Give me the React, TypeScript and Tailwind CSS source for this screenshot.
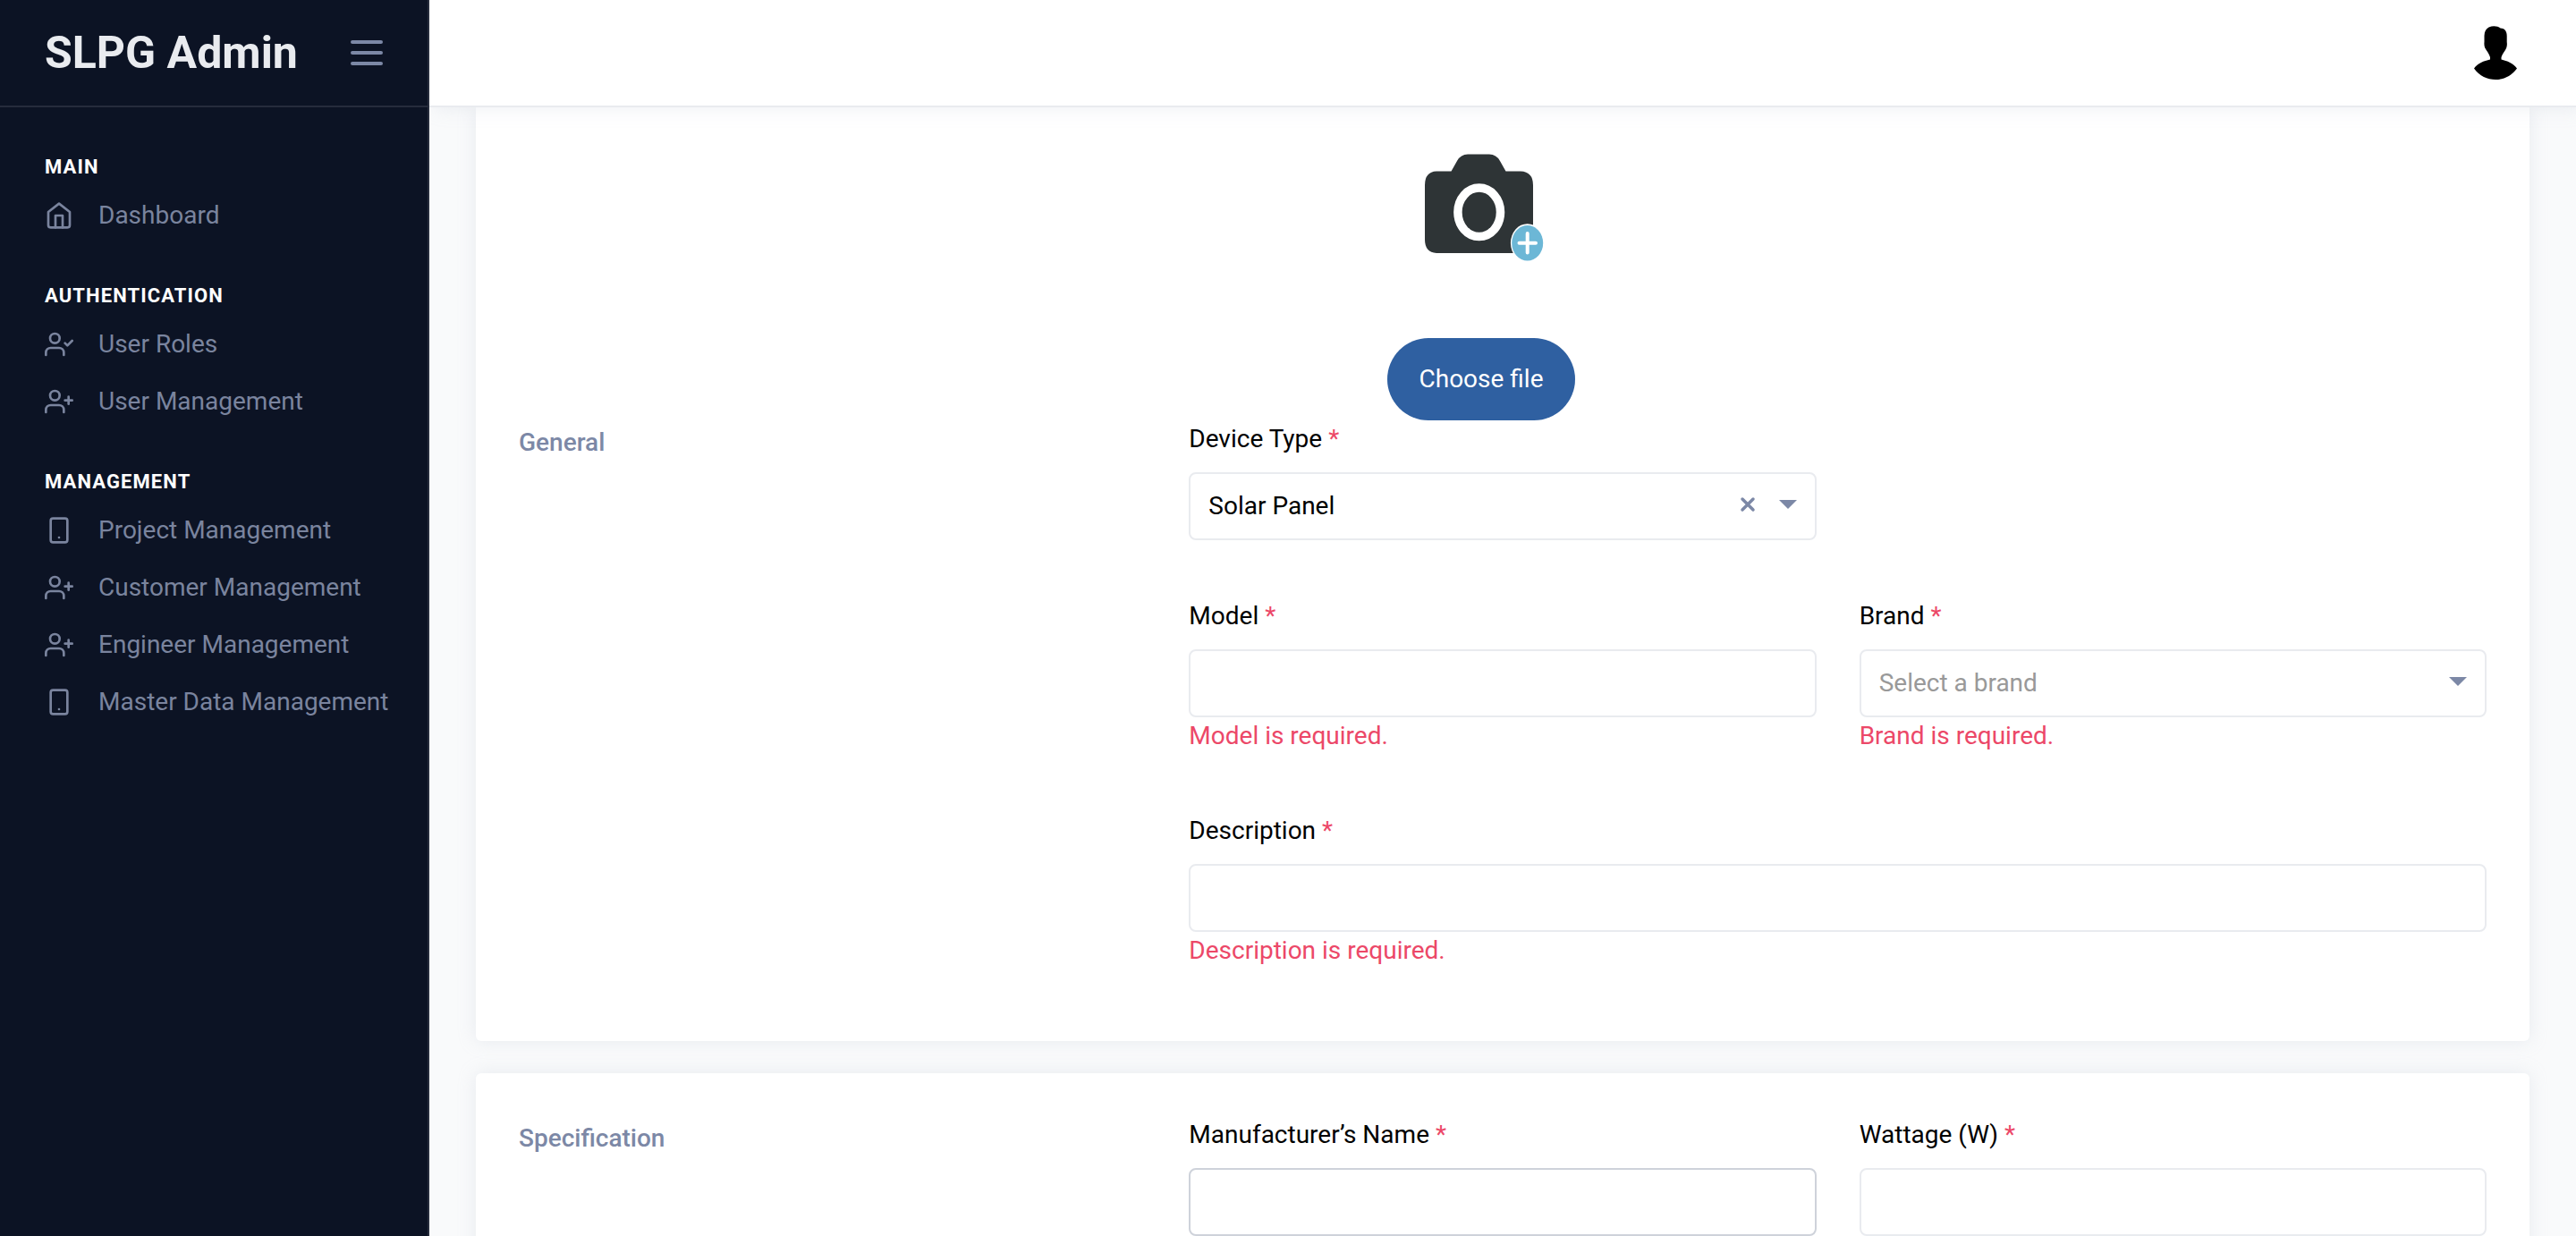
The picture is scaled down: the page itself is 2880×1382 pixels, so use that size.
import type { ReactNode } from "react";
import { FiHome, FiSmartphone, FiUserCheck, FiUserPlus } from "react-icons/fi";
import type { IconType } from "react-icons";

type NavItem = { label: string; icon: IconType };
type NavSection = { title: string; items: NavItem[] };

const sections: NavSection[] = [
  { title: "Main", items: [{ label: "Dashboard", icon: FiHome }] },
  {
    title: "Authentication",
    items: [
      { label: "User Roles", icon: FiUserCheck },
      { label: "User Management", icon: FiUserPlus },
    ],
  },
  {
    title: "Management",
    items: [
      { label: "Project Management", icon: FiSmartphone },
      { label: "Customer Management", icon: FiUserPlus },
      { label: "Engineer Management", icon: FiUserPlus },
      { label: "Master Data Management", icon: FiSmartphone },
    ],
  },
];

function Sidebar() {
  return (
    <aside className="z-20 flex w-[480px] shrink-0 flex-col border-r-2 border-[#262c3c] bg-[#0c1324]">
      <div className="flex h-[120px] shrink-0 items-center justify-between border-b-2 border-[#262c3c] px-[50px]">
        <a href="#" className="text-[50px] leading-none font-bold text-[#e9ebef]">
          SLPG Admin
        </a>
        <button type="button" aria-label="Toggle sidebar" className="flex w-9 flex-col gap-2">
          <span className="h-1 w-full rounded-xs bg-[#7c88a6]" />
          <span className="h-1 w-full rounded-xs bg-[#7c88a6]" />
          <span className="h-1 w-full rounded-xs bg-[#7c88a6]" />
        </button>
      </div>
      <nav className="flex flex-col gap-[34px] px-[50px] pt-[43px]">
        {sections.map((section) => (
          <section key={section.title}>
            <h2 className="flex h-[46px] items-center text-[22px] font-bold tracking-wider text-white uppercase">
              {section.title}
            </h2>
            <ul>
              {section.items.map(({ label, icon: Icon }) => (
                <li key={label}>
                  <a href="#" className="flex h-16 items-center gap-7 text-[28px] whitespace-nowrap text-[#7a849e]">
                    <Icon className="size-8 shrink-0" />
                    {label}
                  </a>
                </li>
              ))}
            </ul>
          </section>
        ))}
      </nav>
    </aside>
  );
}

function Avatar() {
  return (
    <svg viewBox="0 0 60 60" className="size-[60px]" aria-hidden="true">
      <path d="M16.500 1.500C21 -0.500 26.500 0 29.500 2.600C34 2.600 36.700 6 36.700 11V18C37 20 37 22 36.200 24.500C35 28 31.500 31 30.500 35V37.500C37 39 44 42 48 47.500C42 56 33 60 24 60S6 56 0 47.500C4 42 11 39 18 37.500V35C17 31 14 28 12.200 24.500C11.300 22 11.300 20 11.500 18V11C11.700 6 13.500 3 16.500 1.500Z" />
    </svg>
  );
}

function CameraPicture() {
  return (
    <svg viewBox="0 0 200 200" className="size-[200px]" role="img" aria-label="Add a picture">
      <path
        fill="#2e3436"
        d="M50 59.500H66.500L73 48Q77 40.500 85 40.500H109Q117 40.500 121 48L127.500 59.500H144Q158 60 158 75V136Q158 150 145 151H50Q37 150 37 136V75Q37 60 50 59.500Z"
      />
      <ellipse cx="97.700" cy="105.300" rx="23.800" ry="27.200" fill="none" stroke="#fff" strokeWidth="9.500" />
      <ellipse cx="151.700" cy="139.700" rx="18.800" ry="21.500" fill="#fff" />
      <ellipse cx="151.700" cy="139.700" rx="17.500" ry="19.700" fill="#6cb7d6" />
      <path d="M142.500 139.700H161M151.700 129V150.500" stroke="#fff" strokeWidth="4" strokeLinecap="round" />
    </svg>
  );
}

function Caret() {
  return (
    <svg viewBox="0 0 20 10" className="h-2.5 w-5" fill="#7c88a6" aria-hidden="true">
      <path d="M0 0H20L10 10Z" />
    </svg>
  );
}

const boxStyle =
  "block h-[76px] w-full appearance-none rounded-lg border-2 bg-white px-5 text-[28px] outline-none";

type FieldProps = {
  id: string;
  label: string;
  error?: string;
  className?: string;
  children: ReactNode;
};

function Field({ id, label, error, className, children }: FieldProps) {
  return (
    <div className={className}>
      <label htmlFor={id} className="mb-4 block text-[28px] leading-[42px] text-black">
        {label} <span className="text-[#ec4868]">*</span>
      </label>
      {children}
      {error && <p className="text-[28px] leading-[42px] text-[#ec4868]">{error}</p>}
    </div>
  );
}

function Card({ children, className }: { children: ReactNode; className?: string }) {
  return (
    <section className={`rounded-md bg-white px-12 shadow-[0_0_20px_0_rgba(183,192,206,0.25)] ${className ?? ""}`}>
      {children}
    </section>
  );
}

function SectionTitle({ children }: { children: ReactNode }) {
  return <h3 className="pt-1 text-[28px] leading-[42px] font-medium text-[#7c88a6]">{children}</h3>;
}

export default function App() {
  return (
    <div className="flex h-screen overflow-hidden bg-[#f9fafb] font-[Roboto,sans-serif]">
      <Sidebar />
      <div className="flex min-w-0 flex-1 flex-col">
        <header className="z-10 flex h-[120px] shrink-0 items-center justify-end border-b-2 border-[#e9ebef] bg-white pr-[54px] shadow-[6px_0_20px_0_rgba(183,192,206,0.25)]">
          <button type="button" aria-label="Account">
            <Avatar />
          </button>
        </header>
        <main className="flex min-h-0 flex-1 flex-col gap-9 px-[52px]">
          <Card className="shrink-0 rounded-t-none pb-20">
            <div className="flex flex-col items-center gap-[46px] pt-3 pr-12">
              <CameraPicture />
              <button type="button" className="h-[92px] rounded-full bg-[#2f60a1] px-[35px] text-[28px] text-white">
                Choose file
              </button>
            </div>
            <div className="grid grid-cols-3 gap-x-12">
              <SectionTitle>General</SectionTitle>
              <div className="col-span-2 grid grid-cols-2 gap-x-12 gap-y-16">
                <Field id="device-type" label="Device Type">
                  <div className="relative">
                    <select id="device-type" className={`${boxStyle} border-[#e9ebef] text-black`}>
                      <option>Solar Panel</option>
                    </select>
                    <div className="pointer-events-none absolute inset-y-0 right-[22px] flex items-center gap-[26px] pb-1">
                      <button type="button" aria-label="Clear device type" className="pointer-events-auto">
                        <svg viewBox="0 0 18 18" className="size-[18px]" stroke="#7c88a6" strokeWidth="3.500" strokeLinecap="round" aria-hidden="true">
                          <path d="M3 3L15 15M15 3L3 15" />
                        </svg>
                      </button>
                      <Caret />
                    </div>
                  </div>
                </Field>
                <Field id="model" label="Model" error="Model is required." className="col-start-1">
                  <input id="model" type="text" className={`${boxStyle} border-[#e9ebef]`} />
                </Field>
                <Field id="brand" label="Brand" error="Brand is required.">
                  <div className="relative">
                    <select id="brand" className={`${boxStyle} border-[#e9ebef] text-[#999]`}>
                      <option>Select a brand</option>
                    </select>
                    <div className="pointer-events-none absolute inset-y-0 right-[22px] flex items-center pb-1">
                      <Caret />
                    </div>
                  </div>
                </Field>
                <Field id="description" label="Description" error="Description is required." className="col-span-2">
                  <input id="description" type="text" className={`${boxStyle} border-[#e9ebef]`} />
                </Field>
              </div>
            </div>
          </Card>
          <Card className="shrink-0 pt-12 pb-20">
            <div className="grid grid-cols-3 gap-x-12">
              <SectionTitle>Specification</SectionTitle>
              <Field id="manufacturer" label="Manufacturer’s Name">
                <input id="manufacturer" type="text" className={`${boxStyle} border-[#ced2da]`} />
              </Field>
              <Field id="wattage" label="Wattage (W)">
                <input id="wattage" type="text" className={`${boxStyle} border-[#e9ebef]`} />
              </Field>
            </div>
          </Card>
        </main>
      </div>
    </div>
  );
}
